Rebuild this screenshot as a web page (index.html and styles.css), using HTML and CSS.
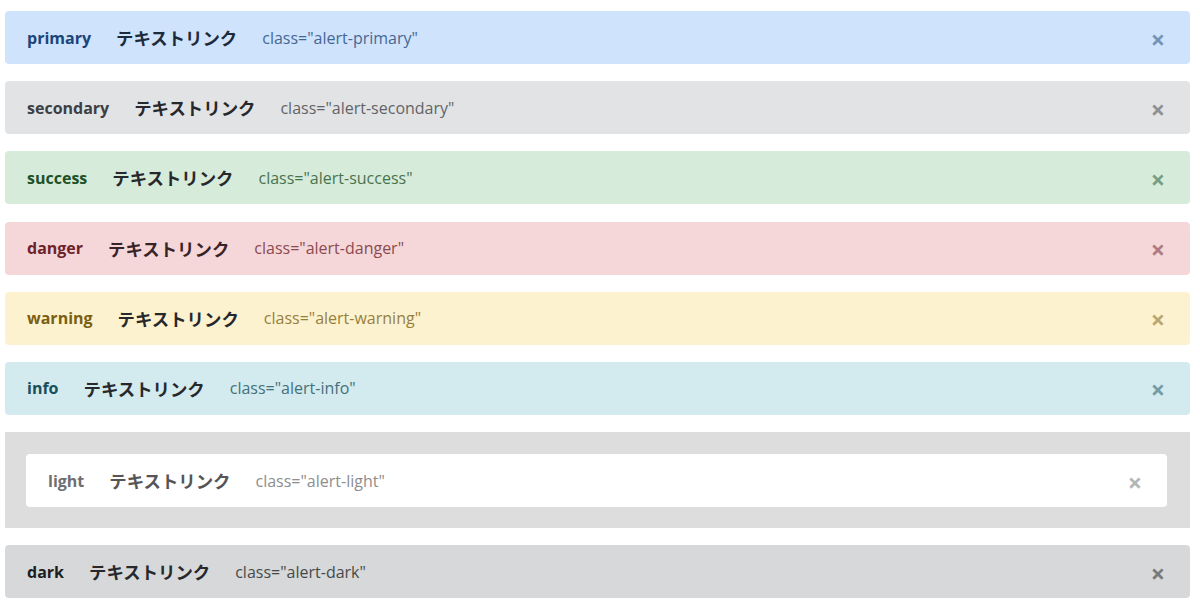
FILE: index.html
```html
<!DOCTYPE html>
<html>
<head>
    <title>Alerts</title>
    <meta charset="UTF-8">
    <meta name="viewport" content="width=device-width, initial-scale=1.0">
    <link rel="stylesheet" href="styles.css">
</head>
<body>
  <div class="alert-list">
    <div class="alert alert-primary">
      <b class="name">primary</b>
      <span class="link">テキストリンク</span>
      <span class="cls">class="alert-primary"</span>
      <span class="close">&times;</span>
    </div>
    <div class="alert alert-secondary">
      <b class="name">secondary</b>
      <span class="link">テキストリンク</span>
      <span class="cls">class="alert-secondary"</span>
      <span class="close">&times;</span>
    </div>
    <div class="alert alert-success">
      <b class="name">success</b>
      <span class="link">テキストリンク</span>
      <span class="cls">class="alert-success"</span>
      <span class="close">&times;</span>
    </div>
    <div class="alert alert-danger">
      <b class="name">danger</b>
      <span class="link">テキストリンク</span>
      <span class="cls">class="alert-danger"</span>
      <span class="close">&times;</span>
    </div>
    <div class="alert alert-warning">
      <b class="name">warning</b>
      <span class="link">テキストリンク</span>
      <span class="cls">class="alert-warning"</span>
      <span class="close">&times;</span>
    </div>
    <div class="alert alert-info">
      <b class="name">info</b>
      <span class="link">テキストリンク</span>
      <span class="cls">class="alert-info"</span>
      <span class="close">&times;</span>
    </div>
    <!-- light alert sits on a grey backdrop so it stays visible -->
    <div class="light-wrap">
      <div class="alert alert-light">
        <b class="name">light</b>
        <span class="link">テキストリンク</span>
        <span class="cls">class="alert-light"</span>
        <span class="close">&times;</span>
      </div>
    </div>
    <div class="alert alert-dark">
      <b class="name">dark</b>
      <span class="link">テキストリンク</span>
      <span class="cls">class="alert-dark"</span>
      <span class="close">&times;</span>
    </div>
  </div>
</body>
</html>
```

FILE: styles.css
```css
body {
  margin: 0;
  padding: 0;
  background: #ffffff;
  font-family: "Open Sans", "Noto Sans", "Noto Sans CJK JP", sans-serif;
}
.alert-list {
  display: flex;
  flex-direction: column;
  gap: 17.2px;
  padding: 11px 10px 0 5px;
}
.alert {
  display: flex;
  align-items: center;
  gap: 25px;
  height: 53px;
  padding: 0 25px 0 22px;
  border-radius: 4px;
  box-sizing: border-box;
}
.name {
  font-size: 16px;
  font-weight: 700;
}
.link {
  font-family: "Noto Sans CJK JP", sans-serif;
  font-size: 17.4px;
  font-weight: 700;
  color: #26282c;
}
.cls {
  font-size: 16px;
  opacity: 0.78;
}
.close {
  margin-left: auto;
  font-size: 25px;
  font-weight: 700;
  line-height: 1;
  opacity: 0.5;
  padding-top: 3px;
}
.light-wrap {
  background: #dddddd;
  padding: 22px 23px 21px 21px;
}
.alert-primary { background: #cfe3fc; color: #1a4578; }
.alert-secondary { background: #e2e3e5; color: #3c3f44; }
.alert-success { background: #d6ebda; color: #1d5128; }
.alert-danger { background: #f5d7da; color: #6e2229; }
.alert-warning { background: #fdf2cf; color: #7a5f12; }
.alert-info { background: #d3eaef; color: #184f5a; }
.alert-light { background: #ffffff; color: #6e6e70; }
.alert-dark { background: #d6d8d9; color: #1b1e21; }
.alert-primary .link { color: #1d2a3c; }
.alert-danger .link { color: #3a2326; }
.alert-light .link { color: #555558; }
```
